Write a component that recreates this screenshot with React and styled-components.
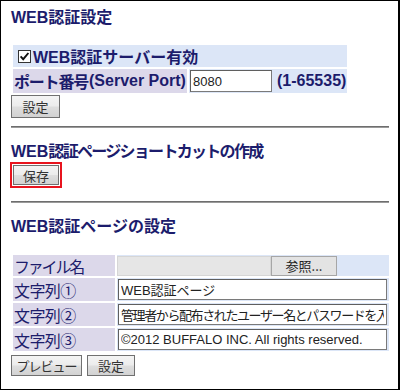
import React from "react";
import styled, { createGlobalStyle, css } from "styled-components";

const GlobalStyle = createGlobalStyle`
  html, body { margin: 0; padding: 0; background: #fff; }
  body { font-family: "Liberation Sans", "Noto Sans CJK JP", sans-serif; }
`;

const Page = styled.div`
  box-sizing: border-box;
  width: 400px;
  height: 390px;
  border: 1px solid #000;
  border-right-width: 2px;
  padding: 6px 8px 0 10px;
  overflow: hidden;
`;

const Title = styled.h2`
  margin: ${(p) => p.$top || 0}px 0 0;
  height: 21px;
  font-size: 16px;
  line-height: 21px;
  font-weight: bold;
  color: #1c1c6c;
  white-space: nowrap;
`;

const Rule = styled.hr`
  margin: ${(p) => p.$top}px 1px 0 0;
  height: 0;
  border: 0;
  border-top: 1px solid #6e6e6e;
  border-bottom: 1px solid #9a9a9a;
`;

const Table = styled.div`
  box-sizing: border-box;
  display: grid;
  grid-template-columns: ${(p) => p.$cols};
  gap: 2px;
  padding: 2px;
  width: ${(p) => p.$width}px;
  margin-top: ${(p) => p.$top}px;
`;

const Cell = styled.div`
  display: flex;
  align-items: center;
  height: ${(p) => p.$h}px;
  padding-left: ${(p) => p.$pad || 0}px;
  grid-column: ${(p) => (p.$span ? "1 / -1" : "auto")};
  background: ${(p) => (p.$label ? "#dcd8ea" : "#dce6f7")};
  color: #1c1c6c;
  font-size: 16px;
  font-weight: ${(p) => (p.$bold ? "bold" : "normal")};
  letter-spacing: ${(p) => (p.$label && !p.$bold ? "-0.6px" : "0")};
  white-space: nowrap;
  overflow: hidden;
`;

const Squeeze = styled.span`
  letter-spacing: ${(p) => p.$ls}px;
  margin-right: ${(p) => p.$after || 0}px;
`;

const Check = styled.span`
  display: inline-flex;
  width: 13px;
  height: 13px;
  margin: 0 2px 0 5px;
  flex: none;
`;

const Note = styled.span`
  margin-left: 5px;
  font-weight: bold;
`;

const TextField = styled.input`
  box-sizing: border-box;
  width: ${(p) => p.$w}px;
  height: ${(p) => p.$h || 21}px;
  margin: 0 0 0 1px;
  padding: 0 2px;
  border: 1px solid #7a7a7a;
  border-top-color: #5f5f5f;
  border-left-color: #5f5f5f;
  background: #fff;
  color: #222;
  font: 13px "Liberation Sans", "Noto Sans CJK JP", sans-serif;
  letter-spacing: ${(p) => (p.$tight ? "-1.4px" : "0")};
  outline: none;
`;

const FileBox = styled.div`
  display: flex;
  align-items: center;
  height: 100%;
`;

const FileName = styled.span`
  box-sizing: border-box;
  width: 154px;
  height: 20px;
  background: #e6e6e6;
  border: 1px solid #d6d6d6;
`;

const Browse = styled.span`
  box-sizing: border-box;
  display: inline-flex;
  align-items: center;
  justify-content: center;
  width: 66px;
  height: 20px;
  border: 1px solid #a6a6a6;
  background: #e3e3e3;
  color: #222;
  font: 13px "Noto Sans CJK JP", sans-serif;
`;

const Button = styled.button`
  box-sizing: border-box;
  width: ${(p) => p.$w}px;
  height: ${(p) => p.$h}px;
  margin: ${(p) => p.$top || 0}px 0 0 ${(p) => p.$left || 0}px;
  padding: 0;
  border: 1px solid #707070;
  border-radius: 0;
  background: linear-gradient(#f4f4f4, #ececec 48%, #dedede 52%, #d2d2d2);
  color: #333;
  font: 13px "Noto Sans CJK JP", sans-serif;
  letter-spacing: ${(p) => (p.$tight ? "-1px" : "0")};
  line-height: 1;
  ${(p) =>
    p.$marked &&
    css`
      outline: 2px solid #e8141e;
      outline-offset: 1px;
    `}
`;

const ButtonRow = styled.div`
  display: flex;
  gap: 5px;
  margin-top: 2px;
`;

const CheckIcon = () => (
  <svg width="13" height="13" viewBox="0 0 13 13">
    <rect x="0.5" y="0.5" width="12" height="12" fill="#fff" stroke="#333" />
    <path d="M2.6 6.4 L5.2 9.2 L10.4 3" fill="none" stroke="#111" strokeWidth="1.9" />
  </svg>
);

export default function App() {
  return (
    <>
      <GlobalStyle />
      <Page>
        <Title>WEB認証設定</Title>
        <Table $cols="174px 1fr" $width={338} $top={15}>
          <Cell $span $h={22} $bold>
            <Check>
              <CheckIcon />
            </Check>
            WEB認証サーバー有効
          </Cell>
          <Cell $label $h={24} $pad={1} $bold>
            <Squeeze $ls={-1.2} $after={1}>ポート番号</Squeeze>(Server Port)
          </Cell>
          <Cell $h={24}>
            <TextField $w={82} $h={22} defaultValue="8080" />
            <Note>(1-65535)</Note>
          </Cell>
        </Table>
        <Button $w={49} $h={23}>設定</Button>
        <Rule $top={8} />

        <Title $top={13}>
          WEB<Squeeze $ls={-1.7}>認証ページショートカットの作成</Squeeze>
        </Title>
        <Button $w={46} $h={20} $top={3} $left={2} $marked>
          保存
        </Button>
        <Rule $top={16} />

        <Title $top={13}>WEB認証ページの設定</Title>
        <Table $cols="102px 1fr" $width={380} $top={16}>
          <Cell $label $h={21} $pad={1}>
            <Squeeze $ls={-2.2}>ファイル名</Squeeze>
          </Cell>
          <Cell $h={21}>
            <FileBox>
              <FileName />
              <Browse>参照...</Browse>
            </FileBox>
          </Cell>
          <Cell $label $h={23} $pad={1}>文字列①</Cell>
          <Cell $h={23}>
            <TextField $w={269} defaultValue="WEB認証ページ" />
          </Cell>
          <Cell $label $h={23} $pad={1}>文字列②</Cell>
          <Cell $h={23}>
            <TextField
              $w={269}
              $tight
              defaultValue="管理者から配布されたユーザー名とパスワードを入力してください。"
            />
          </Cell>
          <Cell $label $h={23} $pad={1}>文字列③</Cell>
          <Cell $h={23}>
            <TextField $w={269} defaultValue="©2012 BUFFALO INC. All rights reserved." />
          </Cell>
        </Table>
        <ButtonRow>
          <Button $w={71} $h={21} $tight>プレビュー</Button>
          <Button $w={48} $h={21}>設定</Button>
        </ButtonRow>
      </Page>
    </>
  );
}
